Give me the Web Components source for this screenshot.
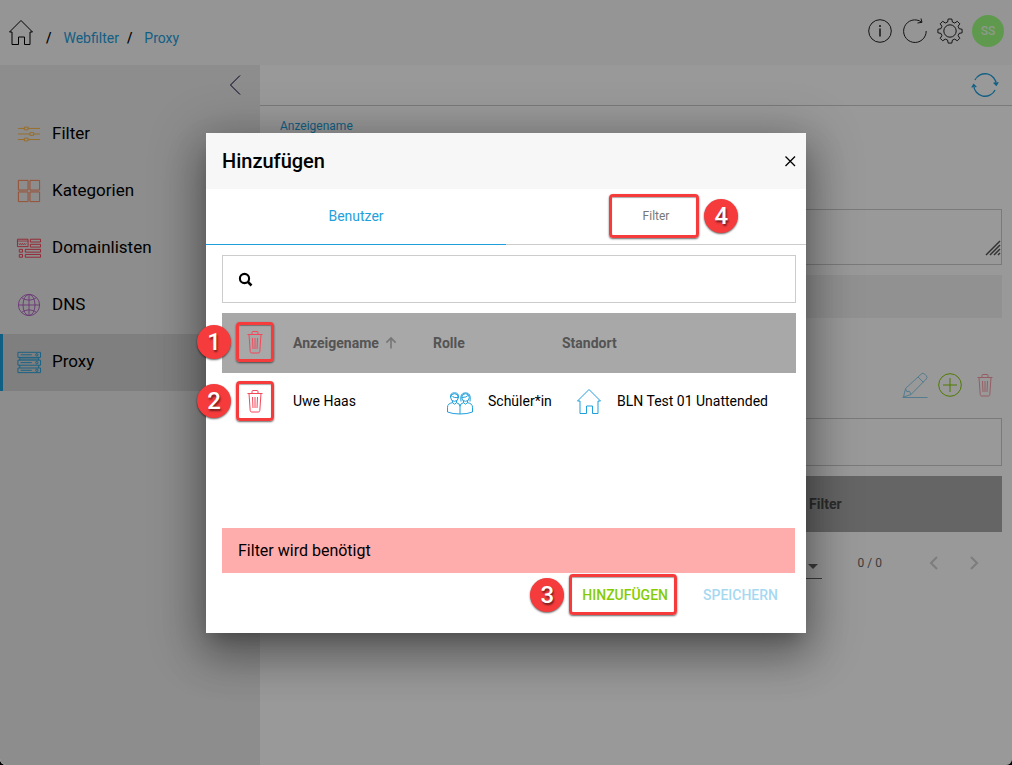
<!DOCTYPE html>
<html lang="de">
<head>
<meta charset="utf-8">
<meta name="viewport" content="width=device-width, initial-scale=1">
<title>Webfilter – Proxy</title>
<style>
  html {
    background: #000;
  }
  body {
    margin: 0;
    font-family: Roboto, "Liberation Sans", sans-serif;
    font-size: 14px;
    color: #000;
    --blue: #1f9fdc;
    --line: #ccc;
    --head: #a8a8a8;
  }
</style>
</head>
<body>
<app-shell>
  <app-header slot="header"></app-header>
  <side-nav slot="side">
    <nav-item icon="sliders" style="--tint: #ffb43c">Filter</nav-item>
    <nav-item icon="grid" style="--tint: #ff7c4c">Kategorien</nav-item>
    <nav-item icon="domains" style="--tint: #f53c50">Domainlisten</nav-item>
    <nav-item icon="globe" style="--tint: #b25cc8">DNS</nav-item>
    <nav-item icon="servers" style="--tint: #1f9fdc" active>Proxy</nav-item>
  </side-nav>
  <proxy-form></proxy-form>
  <add-dialog slot="dialog"></add-dialog>
</app-shell>

<script>
const icons = {
  home: `<path d="M1.5 13 13 1.5 24.500 13H22v12.500h-5.500V18h-6v7.500H4V13z"/>`,
  back: `<path d="M18 3.500 8.500 13 18 22.500"/>`,
  info: `<circle cx="13" cy="13" r="11.300"/><path d="M13 10.500V18.500M13 7v2" stroke-width="1.500"/>`,
  reload: `<path d="M24.200 13A11.300 11.300 0 1 1 19.500 4M15.500 5l4.500-.7-1-3.800"/>`,
  gear: `<circle cx="13" cy="13" r="6.200"/>
    <path d="M11.200 1h3.600l.6 3 2.300 1 2.600-1.700 2.500 2.500-1.700 2.500 1 2.400 3 .6v3.500l-3 .6-1 2.300 1.700 2.600-2.500 2.500-2.600-1.700-2.300 1-.6 3h-3.600l-.6-3-2.300-1-2.600 1.700-2.500-2.500 1.700-2.600-1-2.300-3-.6v-3.500l3-.6 1-2.400-1.700-2.500 2.500-2.500L8.300 5l2.300-1z" stroke-linejoin="round"/>`,
  sync: `<path d="M2.900 8A11.300 11.300 0 0 1 24.300 12.500M21.700 10.500l2.600 2.700 1.900-3.100M23.100 18A11.300 11.300 0 0 1 1.700 13.500M-.2 15.500l1.900-3 2.600 2.600" stroke-width="1.300"/>`,
  sliders: `<path d="M1 7h7m4 0h13M1 13h13m4 0h7M1 19h7m4 0h13"/>
    <path d="M8 5.500h4v3H8zM14 11.500h4v3h-4zM8 17.500h4v3H8z"/>`,
  grid: `<path d="M1.500 1.500h10.500v10.500H1.500zM14 1.500h10.500v10.500H14zM1.500 14h10.500v10.500H1.500zM14 14h10.500v10.500H14z"/>`,
  domains: `<path d="M.5 3.500h11.500v8H.5zM14.500 3.500h11v3h-11zM14.500 9h11v3h-11zM2.500 14.500h3.500v3H2.500zM9 14.500h16.500v3H9zM2.500 20h3.500v3H2.500zM9 20h16.500v3H9z"/>
    <path d="M.5 5.500h11.500M2 8l1 1.500 1-1.500 1 1.500L6 8l1 1.500L8 8l1 1.500 1-1.500" stroke-width=".8"/>`,
  globe: `<circle cx="13" cy="13" r="11.500"/><ellipse cx="13" cy="13" rx="6.500" ry="11.500"/>
    <path d="M13 1.500v23M1.500 13h23M5 5c4.500 3.500 11.500 3.500 16 0M5 21c4.500-3.500 11.500-3.500 16 0"/>`,
  servers: `<path d="M1 2.500h24.500v5.500H1zM1 11h24.500v5.500H1zM1 19.500h24.500v5H1zM3 8v3M23.500 8v3M3 16.500v3M23.500 16.500v3M4 5.200h12M4 13.700h12M4 22h12"/>
    <circle cx="21.500" cy="5.200" r="1.300"/><circle cx="21.500" cy="13.700" r="1.300"/><circle cx="21.500" cy="22" r="1.300"/>
    <path d="M3 9.500h20.500" stroke-width="2.500" opacity=".4"/>`,
  pencil: `<path d="M3.500 16.500 19.500 1.800q1.500-1.200 3.200.3l1.500 1.500q1.500 1.700.2 3.200L9 22.500l-7.500 2.500zM16 5l5.500 5.500M3.500 16.500l1.300 3.200 2.700-.4 1.500 3.200M.5 25.500h25"/>`,
  plus: `<circle cx="13" cy="13" r="11.300"/><path d="M13 6v14M6 13h14"/>`,
  trash: `<path d="M5.500 5.500h15M7 5.500l1.200 17q.2 1.500 1.500 1.500h6.600q1.300 0 1.500-1.500l1.200-17M10 5V3.500q0-1 1-1h4q1 0 1 1V5M10.500 9l.5 11M13 9v11M15.500 9l-.5 11"/>`,
  people: `<circle cx="7.500" cy="9.500" r="3.800"/><circle cx="18.500" cy="9.500" r="3.800"/>
    <path d="M3.500 9.500Q3 4.800 7.500 4.800T11.500 9.500Q6 10 5.500 8M14 13.500Q12.500 4.800 18.500 4.800T23 13.500M14.800 9.500q5 0 6-2M5.500 13v1.700q-5 .8-5 4.500V24q5 2 12.500 2t12.500-2v-4.800q0-3.700-5-4.500V13M9.500 13v1.700q3.500.8 3.500 3.800 0-3 3.500-3.800V13M13 18.500V26M5.500 14.700l2 1.500 2-1.500M16.500 14.700l2 1.500 2-1.500"/>`,
  search: `<circle cx="12.500" cy="12.500" r="4.600" stroke-width="2.100"/><path d="m16 16 3.500 3.500" stroke-width="2.500"/>`,
  close: `<path d="m8.500 8.500 9.500 9.500M18 8.500 8.500 18" stroke-width="1.300"/>`,
  up: `<path d="M13 19V8M8 12.500l5-5 5 5" stroke-width="1.800"/>`,
  prev: `<path d="m16 7-6 6 6 6" stroke-width="2"/>`,
  next: `<path d="m10 7 6 6-6 6" stroke-width="2"/>`
};

class LineIcon extends HTMLElement {
  connectedCallback() {
    this.attachShadow({ mode: "open" }).innerHTML = `
    <style>
      :host {
        display: block;
        flex: none;
        width: 26px;
        height: 26px;
      }
      svg {
        display: block;
        width: 100%;
        height: 100%;
        overflow: visible;
        fill: none;
        stroke: currentColor;
      }
    </style>
    <svg viewBox="0 0 26 26" aria-hidden="true">${icons[this.getAttribute("name")]}</svg>
  `;
  }
}

customElements.define("line-icon", LineIcon);

// red frame around its content, with a numbered disc beside it
class StepMark extends HTMLElement {
  connectedCallback() {
    this.attachShadow({ mode: "open" }).innerHTML = `
    <style>
      :host {
        position: relative;
        display: inline-flex;
        align-items: center;
        justify-content: center;
        box-sizing: border-box;
        border: 3px solid #f53b3c;
        border-radius: 4px;
        box-shadow: 0 1px 2px #0009, 0 1px 1px #0005 inset;
      }
      .disc {
        position: absolute;
        top: 50%;
        right: calc(100% + 8px);
        width: 34px;
        margin-top: -17px;
        border-radius: 50%;
        background: #f53b3c;
        box-shadow: 0 1px 2px #0009;
        color: #fff;
        font: 500 24px/34px Roboto, "Liberation Sans", sans-serif;
        text-align: center;
        text-shadow: 1px 2px 2px #0008;
      }
      :host([side="right"]) .disc {
        right: auto;
        left: calc(100% + 8px);
      }
    </style>
    <slot></slot>
    <span class="disc">${this.getAttribute("number")}</span>
  `;
  }
}

customElements.define("step-mark", StepMark);

class AppShell extends HTMLElement {
  connectedCallback() {
    this.attachShadow({ mode: "open" }).innerHTML = `
    <style>
      :host {
        position: relative;
        display: flex;
        flex-direction: column;
        min-height: 100vh;
        overflow: hidden;
        border-radius: 0 0 6px 6px;
        background: #fff;
      }
      .body {
        flex: 1;
        display: grid;
        grid-template-columns: 260px 1fr;
      }
    </style>
    <slot name="header"></slot>
    <div class="body">
      <slot name="side"></slot>
      <slot></slot>
    </div>
    <slot name="dialog"></slot>
  `;
  }
}

customElements.define("app-shell", AppShell);

class AppHeader extends HTMLElement {
  connectedCallback() {
    this.attachShadow({ mode: "open" }).innerHTML = `
    <style>
      :host {
        display: flex;
        justify-content: space-between;
        align-items: center;
        box-sizing: border-box;
        height: 65px;
        padding: 0 8px 4px;
        background: #f8f8f8;
      }
      nav, .tools {
        display: flex;
      }
      nav {
        align-items: flex-end;
        gap: 12px;
        margin-top: 4px;
        line-height: 16px;
      }
      .tools {
        align-items: center;
        gap: 9px;
      }
      nav span {
        font-weight: 500;
      }
      nav a + span {
        margin-left: -4px;
      }
      nav a:first-child + span {
        margin-left: 0;
      }
      a {
        color: var(--blue);
        text-decoration: none;
      }
      a line-icon {
        padding-bottom: 1px;
        color: #000;
      }
      button {
        padding: 0;
        border: 0;
        background: none;
        color: #222;
        font: inherit;
      }
      .avatar {
        width: 32px;
        height: 32px;
        border-radius: 50%;
        background: #9eff82;
        color: #ffffffcc;
        font-size: 12px;
        font-weight: 500;
      }
    </style>
    <nav aria-label="Pfad">
      <a href="#" aria-label="Start"><line-icon name="home"></line-icon></a>
      <span>/</span><a href="#webfilter">Webfilter</a>
      <span>/</span><a href="#proxy">Proxy</a>
    </nav>
    <div class="tools">
      <button type="button" aria-label="Info"><line-icon name="info"></line-icon></button>
      <button type="button" aria-label="Neu laden"><line-icon name="reload"></line-icon></button>
      <button type="button" aria-label="Einstellungen"><line-icon name="gear"></line-icon></button>
      <button type="button" class="avatar">SS</button>
    </div>
  `;
  }
}

customElements.define("app-header", AppHeader);

class SideNav extends HTMLElement {
  connectedCallback() {
    this.attachShadow({ mode: "open" }).innerHTML = `
    <style>
      :host {
        display: block;
        background: #ebebeb;
      }
      .top {
        display: flex;
        justify-content: flex-end;
        padding: 7px 12px 8px;
      }
      button {
        padding: 0;
        border: 0;
        background: none;
        color: #003;
      }
    </style>
    <div class="top">
      <button type="button" aria-label="Einklappen"><line-icon name="back"></line-icon></button>
    </div>
    <nav><slot></slot></nav>
  `;
  }
}

customElements.define("side-nav", SideNav);

class NavItem extends HTMLElement {
  connectedCallback() {
    this.attachShadow({ mode: "open" }).innerHTML = `
    <style>
      :host {
        display: block;
      }
      a {
        display: flex;
        align-items: center;
        gap: 11px;
        box-sizing: border-box;
        height: 57px;
        padding-left: 14px;
        padding-bottom: 3px;
        border-left: 3px solid transparent;
        color: #000;
        font-size: 17px;
        text-decoration: none;
      }
      :host([active]) a {
        border-color: var(--blue);
        background: #d4d4d4;
      }
      line-icon {
        width: 24px;
        height: 24px;
        padding-top: 2px;
        color: var(--tint);
      }
    </style>
    <a href="#"><line-icon name="${this.getAttribute("icon")}"></line-icon><slot></slot></a>
  `;
  }
}

customElements.define("nav-item", NavItem);

class ProxyForm extends HTMLElement {
  connectedCallback() {
    this.attachShadow({ mode: "open" }).innerHTML = `
    <style>
      :host {
        display: block;
        min-width: 0;
      }
      button {
        padding: 0;
        border: 0;
        background: none;
        color: inherit;
      }
      .toolbar {
        display: flex;
        justify-content: flex-end;
        padding: 7px 14px;
        border-bottom: 1px solid var(--line);
        color: var(--blue);
      }
      form {
        padding: 12px 10px 0 20px;
      }
      label {
        display: block;
        color: var(--blue);
        font-size: 12px;
        line-height: 16px;
      }
      input, textarea {
        display: block;
        box-sizing: border-box;
        width: 100%;
        height: 48px;
        border: 1px solid var(--line);
        background: none;
        font: inherit;
      }
      label + input {
        border-color: transparent;
      }
      textarea {
        height: 56px;
        margin: 27px 0 10px;
        resize: none;
      }
      .note {
        position: relative;
      }
      .grip {
        position: absolute;
        right: 1px;
        bottom: 9px;
        width: 16px;
        height: 16px;
        stroke: #555;
        stroke-width: 1.500;
      }
      .panel {
        height: 43px;
        background: #f2f2f2;
      }
      .actions {
        display: flex;
        align-items: center;
        justify-content: flex-end;
        gap: 9px;
        height: 66px;
        margin-top: 34px;
        padding-right: 4px;
      }
      .actions button:disabled {
        opacity: .5;
      }
      table {
        width: 100%;
        margin-top: 10px;
        border-collapse: collapse;
        table-layout: fixed;
        background: var(--head);
      }
      th {
        height: 56px;
        padding: 0;
        color: #4a4a4a;
        text-align: left;
      }
      td:first-child {
        width: 73%;
      }
      .pager {
        display: flex;
        align-items: center;
        justify-content: flex-end;
        height: 62px;
        padding-right: 8px;
        color: #666;
        font-size: 12px;
      }
      .size {
        position: relative;
        margin-right: 36px;
      }
      select {
        appearance: none;
        width: 56px;
        height: 32px;
        padding: 0;
        border: 0;
        border-bottom: 1px solid #666;
        border-radius: 0;
        background: none;
        font: inherit;
      }
      .size::after {
        content: "";
        position: absolute;
        right: 4px;
        top: 17px;
        border: 5px solid transparent;
        border-top-color: #666;
        border-bottom: 0;
      }
      .pager button {
        display: flex;
        justify-content: center;
        width: 40px;
        color: #d0d0d0;
      }
      .count {
        margin-right: 32px;
      }
    </style>
    <div class="toolbar">
      <button type="button" aria-label="Aktualisieren"><line-icon name="sync"></line-icon></button>
    </div>
    <form>
      <label for="name">Anzeigename</label>
      <input id="name">
      <div class="note">
        <textarea aria-label="Beschreibung"></textarea>
        <svg class="grip" viewBox="0 0 16 16" aria-hidden="true"><path d="M1 15 15 1M5 15 15 5M9 15l6-6M13 15l2-2"/></svg>
      </div>
      <div class="panel"></div>
      <div class="actions">
        <button type="button" disabled aria-label="Bearbeiten" style="color: var(--blue)"><line-icon name="pencil"></line-icon></button>
        <button type="button" aria-label="Neu" style="color: #84cc00"><line-icon name="plus"></line-icon></button>
        <button type="button" disabled aria-label="Entfernen" style="color: #f53c50"><line-icon name="trash"></line-icon></button>
      </div>
      <input type="search" aria-label="Suche">
      <table>
        <thead><tr><td></td><th scope="col">Filter</th></tr></thead>
      </table>
      <div class="pager">
        <span class="size"><select aria-label="Zeilen"><option></option></select></span>
        <span class="count">0 / 0</span>
        <button type="button" aria-label="Zurück"><line-icon name="prev"></line-icon></button>
        <button type="button" aria-label="Weiter"><line-icon name="next"></line-icon></button>
      </div>
    </form>
  `;
  }
}

customElements.define("proxy-form", ProxyForm);

class AddDialog extends HTMLElement {
  connectedCallback() {
    this.attachShadow({ mode: "open" }).innerHTML = `
    <style>
      :host {
        position: absolute;
        inset: 0;
        display: grid;
        place-items: center;
        padding-top: 1px;
        background: #0006;
      }
      section {
        display: flex;
        flex-direction: column;
        width: 600px;
        max-width: 80vw;
        min-height: 500px;
        background: #fff;
        box-shadow:
          0 11px 15px -7px #0003,
          0 24px 38px 3px #0003,
          0 9px 46px 8px #0004;
      }
      button {
        padding: 0;
        border: 0;
        background: none;
        color: inherit;
        font: inherit;
      }
      header {
        display: flex;
        align-items: center;
        justify-content: space-between;
        height: 56px;
        padding: 0 3px 0 16px;
        background: #f7f7f7;
      }
      h2 {
        margin: 0;
        font-size: 20px;
        font-weight: 500;
      }
      .tabs {
        display: flex;
        height: 56px;
        margin-bottom: 10px;
      }
      .tabs button {
        flex: none;
        width: 50%;
        padding-bottom: 2px;
        border-bottom: 1px solid var(--line);
        color: #777;
        font-size: 12px;
      }
      .tabs [aria-selected="true"] {
        border-color: var(--blue);
        color: var(--blue);
        font-size: 14px;
      }
      .tabs button:last-child {
        padding-right: 4px;
      }
      .tabs step-mark {
        height: 44px;
        padding: 0 27px 0 31px;
      }
      .search {
        display: flex;
        align-items: center;
        box-sizing: border-box;
        height: 48px;
        margin: 0 10px 10px 16px;
        padding-left: 9px;
        border: 1px solid var(--line);
      }
      input {
        flex: 1;
        border: 0;
        outline: 0;
        background: none;
        font: inherit;
      }
      .list {
        flex: 1;
        margin: 0 10px 0 16px;
      }
      table {
        width: 100%;
        border-collapse: collapse;
        table-layout: fixed;
      }
      thead {
        background: var(--head);
        color: #545454;
      }
      thead tr {
        height: 60px;
      }
      tbody tr {
        height: 56px;
      }
      th, td {
        padding: 0;
        text-align: left;
        white-space: nowrap;
      }
      th:first-child, td:first-child {
        width: 57px;
        padding-left: 14px;
      }
      thead th:first-child {
        padding-bottom: 2px;
      }
      th:nth-child(2) {
        width: 140px;
      }
      th:nth-child(3) {
        width: 129px;
      }
      table step-mark {
        display: flex;
        width: 38px;
        height: 40px;
        color: #f5475a;
      }
      .sort, .pair {
        display: flex;
        align-items: center;
      }
      .sort line-icon {
        width: 24px;
        height: 24px;
        color: #777;
      }
      .pair {
        gap: 15px;
        padding-left: 14px;
      }
      .pair line-icon {
        color: var(--blue);
      }
      .alert {
        margin: 0 11px 0 16px;
        padding: 0 16px;
        background: #ffacac;
        font-size: 16px;
        line-height: 45px;
      }
      footer {
        display: flex;
        justify-content: flex-end;
        align-items: center;
        gap: 26px;
        padding: 1px 28px 18px;
        font-weight: 500;
      }
      footer step-mark {
        height: 41px;
        padding: 0 6px 0 10px;
      }
      .add {
        color: #84cc00;
      }
      .save {
        color: #a6d9f1;
      }
    </style>
    <section role="dialog" aria-labelledby="title">
      <header>
        <h2 id="title">Hinzufügen</h2>
        <button type="button" aria-label="Schließen"><line-icon name="close"></line-icon></button>
      </header>
      <div class="tabs" role="tablist">
        <button type="button" role="tab" aria-selected="true">Benutzer</button>
        <button type="button" role="tab" aria-selected="false"><step-mark number="4" side="right">Filter</step-mark></button>
      </div>
      <label class="search">
        <line-icon name="search"></line-icon>
        <input type="search" aria-label="Suche">
      </label>
      <div class="list">
        <table>
          <thead>
            <tr>
              <th scope="col"><step-mark number="1"><button type="button" aria-label="Alle entfernen"><line-icon name="trash"></line-icon></button></step-mark></th>
              <th scope="col"><span class="sort">Anzeigename<line-icon name="up"></line-icon></span></th>
              <th scope="col">Rolle</th>
              <th scope="col">Standort</th>
            </tr>
          </thead>
          <tbody>
            <tr>
              <td><step-mark number="2"><button type="button" aria-label="Entfernen"><line-icon name="trash"></line-icon></button></step-mark></td>
              <td>Uwe Haas</td>
              <td><span class="pair"><line-icon name="people"></line-icon>Schüler*in</span></td>
              <td><span class="pair"><line-icon name="home"></line-icon>BLN Test 01 Unattended</span></td>
            </tr>
          </tbody>
        </table>
      </div>
      <div class="alert" role="alert">Filter wird benötigt</div>
      <footer>
        <step-mark number="3"><button type="button" class="add">HINZUFÜGEN</button></step-mark>
        <button type="button" class="save" disabled>SPEICHERN</button>
      </footer>
    </section>
  `;
  }
}

customElements.define("add-dialog", AddDialog);
</script>
</body>
</html>
